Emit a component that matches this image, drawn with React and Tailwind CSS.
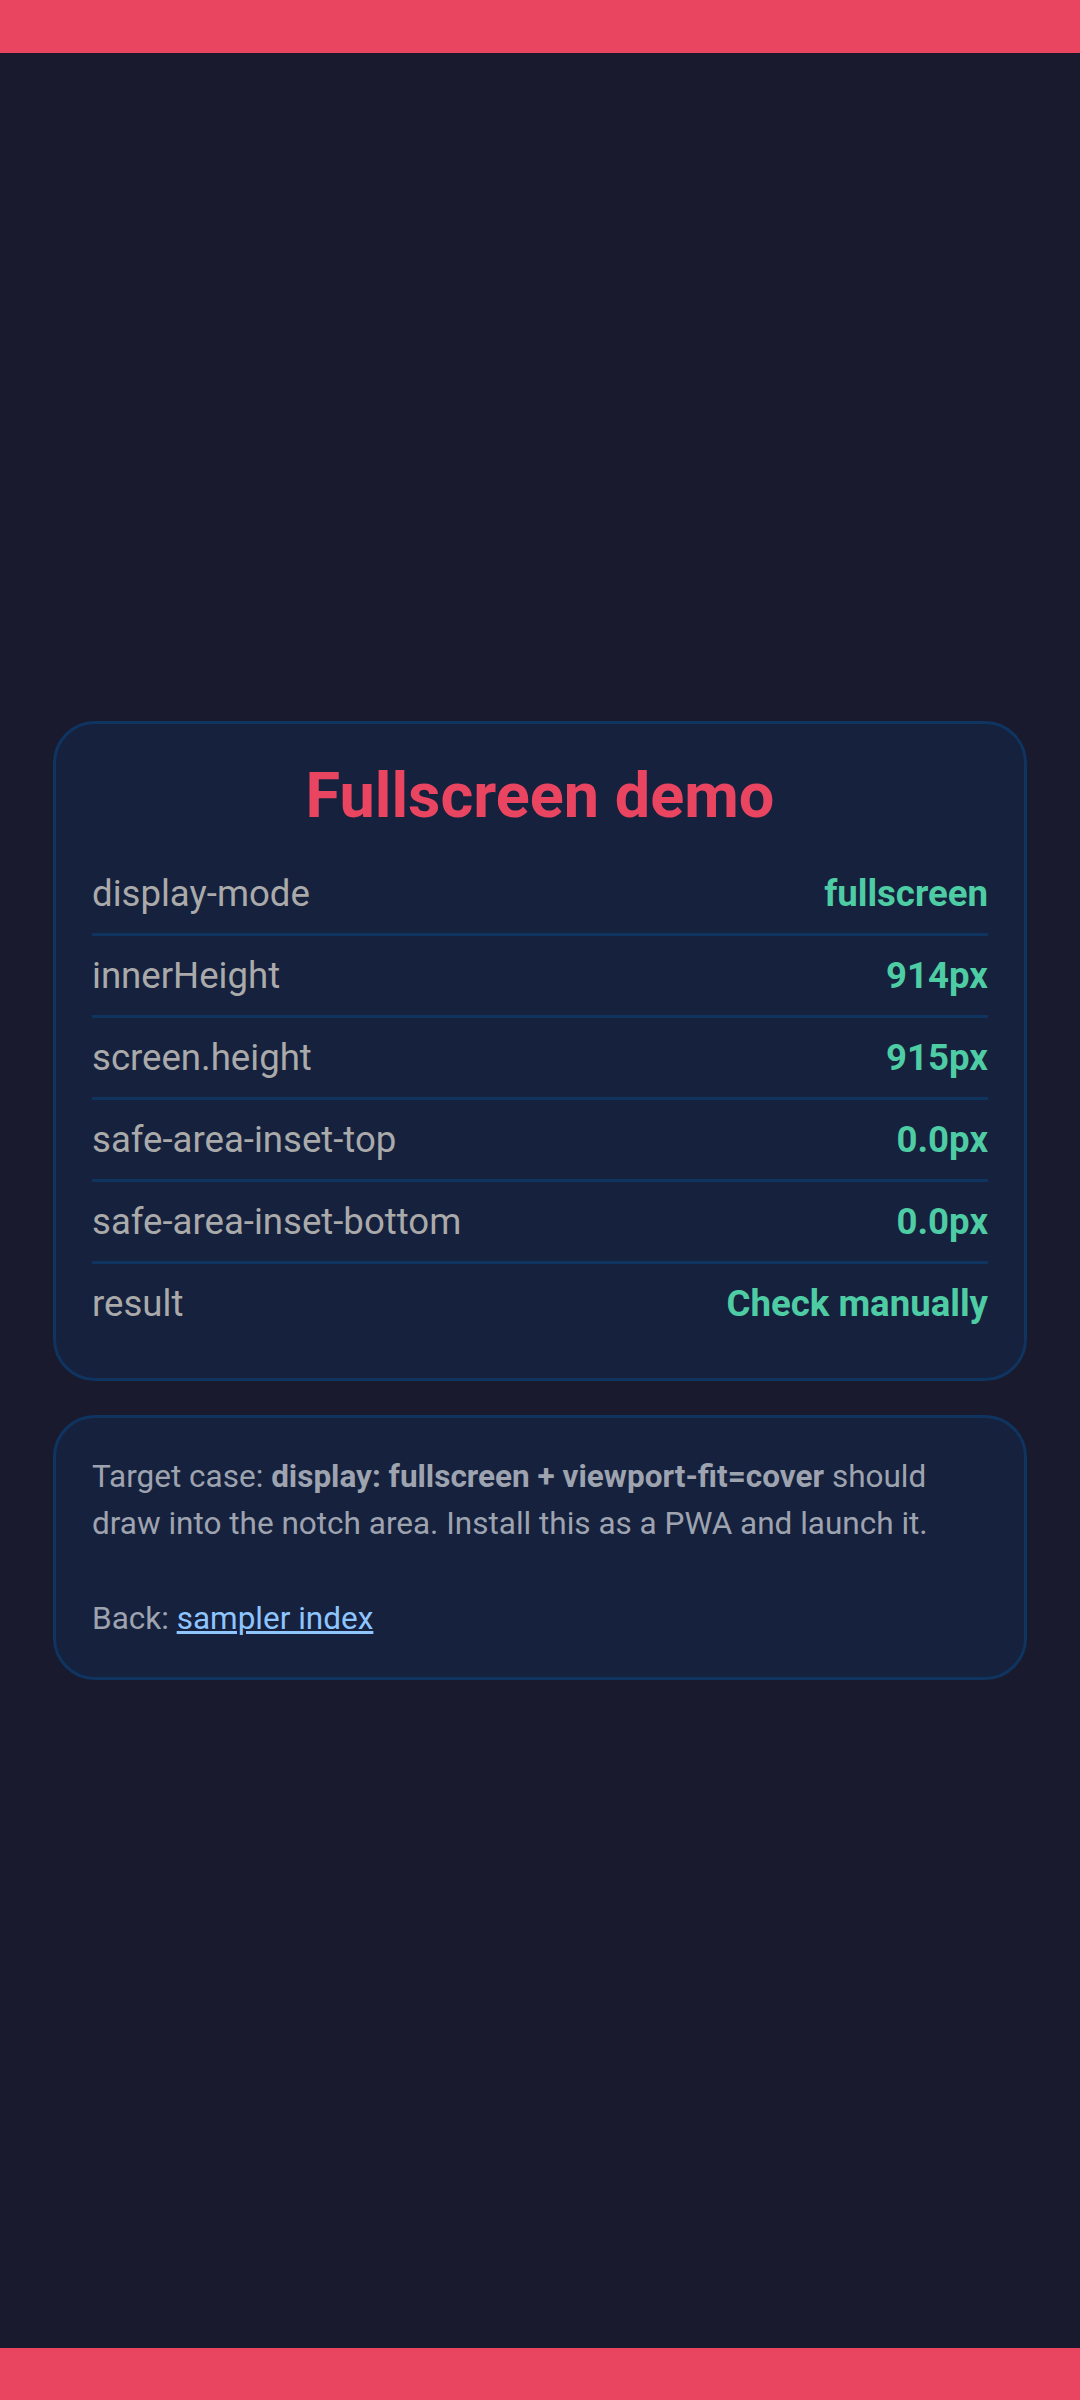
import React from 'react';

const rows = [
  ['display-mode', 'fullscreen'],
  ['innerHeight', '914px'],
  ['screen.height', '915px'],
  ['safe-area-inset-top', '0.0px'],
  ['safe-area-inset-bottom', '0.0px'],
  ['result', 'Check manually'],
];

const App = () => {
  return (
    <div className="min-h-[2400px] w-full bg-[#1a1a2e] flex flex-col font-['Roboto',sans-serif]">
      {/* safe-area bar top */}
      <div className="h-[53px] bg-[#e94560] shrink-0" />

      <div className="flex-1 flex flex-col justify-center px-[53px] gap-[34px]">
        {/* Status card */}
        <div className="bg-[#16213e] border-[3px] border-[#0f3460] rounded-[42px] px-[36px] pt-[35px] pb-[35px]">
          <h1 className="text-[63px] leading-[74px] font-bold text-[#e94560] text-center mb-[21px]">
            Fullscreen demo
          </h1>
          {rows.map(([label, value], i) => (
            <div
              key={label}
              className={
                'flex justify-between items-center py-[17px] text-[36.6px] leading-[45px] ' +
                (i < rows.length - 1 ? 'border-b-[3px] border-[#0f3460]' : '')
              }
            >
              <span className="text-[#aaaaaa]">{label}</span>
              <span className="text-[#4ecca3] font-bold">{value}</span>
            </div>
          ))}
        </div>

        {/* Notes card */}
        <div className="bg-[#16213e] border-[3px] border-[#0f3460] rounded-[42px] px-[36px] py-[35px] text-[31.5px] leading-[47.4px] text-[#9ea3b0]">
          <p>
            Target case: <b>display: fullscreen + viewport-fit=cover</b> should draw into the notch area. Install this as a PWA and launch it.
          </p>
          <p className="mt-[47.4px]">
            Back: <a href="#" className="text-[#8ec5ff] underline">sampler index</a>
          </p>
        </div>
      </div>

      {/* safe-area bar bottom */}
      <div className="h-[52px] bg-[#e94560] shrink-0" />
    </div>
  );
};

export default App;
